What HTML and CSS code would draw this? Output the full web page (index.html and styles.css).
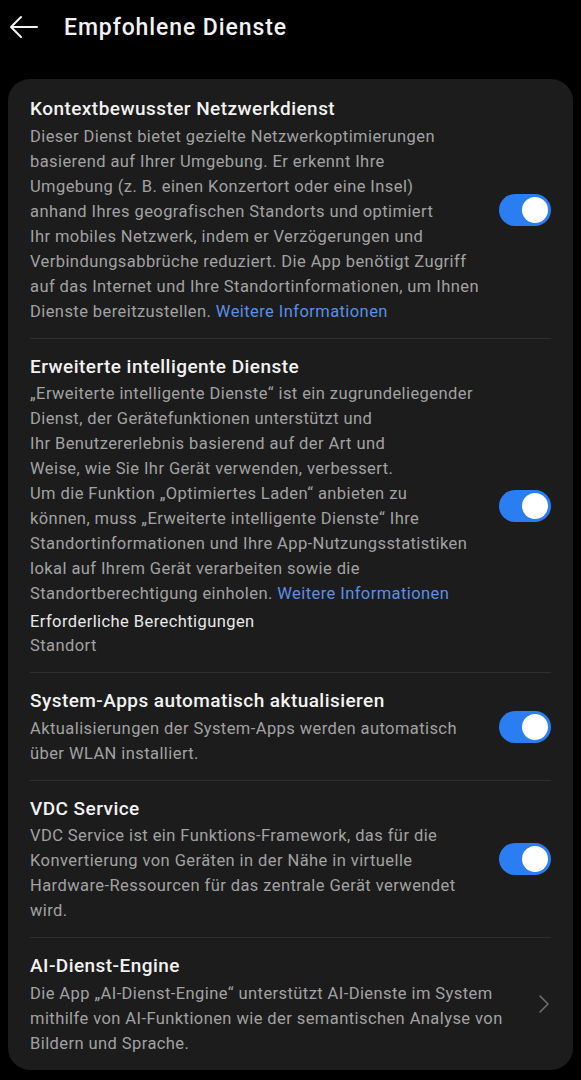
FILE: index.html
```html
<!DOCTYPE html>
<html lang="de">
<head>
    <meta charset="UTF-8">
    <meta name="viewport" content="width=device-width, initial-scale=1.0">
    <title>Empfohlene Dienste</title>
    <link rel="stylesheet" href="styles.css">
</head>
<body>
    <header class="top-bar">
        <button class="back-button" aria-label="Zurück">
            <svg width="30" height="24" viewBox="0 0 30 24">
                <path d="M28 12H2M12 2L2 12l10 10" fill="none" stroke="#f2f2f2" stroke-width="2" stroke-linecap="round" stroke-linejoin="round"/>
            </svg>
        </button>
        <h1 class="page-title">Empfohlene Dienste</h1>
    </header>

    <main class="card">
        <!-- Kontextbewusster Netzwerkdienst -->
        <section class="row">
            <div class="row-text">
                <h2 class="row-title">Kontextbewusster Netzwerkdienst</h2>
                <p class="row-desc">Dieser Dienst bietet gezielte Netzwerkoptimierungen<br>basierend auf Ihrer Umgebung. Er erkennt Ihre<br>Umgebung (z. B. einen Konzertort oder eine Insel)<br>anhand Ihres geografischen Standorts und optimiert<br>Ihr mobiles Netzwerk, indem er Verzögerungen und<br>Verbindungsabbrüche reduziert. Die App benötigt Zugriff<br>auf das Internet und Ihre Standortinformationen, um Ihnen<br>Dienste bereitzustellen. <a class="more-link" href="#">Weitere Informationen</a></p>
            </div>
            <label class="switch"><input type="checkbox" checked><span class="slider"></span></label>
        </section>

        <!-- Erweiterte intelligente Dienste -->
        <section class="row">
            <div class="row-text">
                <h2 class="row-title">Erweiterte intelligente Dienste</h2>
                <p class="row-desc">„Erweiterte intelligente Dienste“ ist ein zugrundeliegender<br>Dienst, der Gerätefunktionen unterstützt und<br>Ihr Benutzererlebnis basierend auf der Art und<br>Weise, wie Sie Ihr Gerät verwenden, verbessert.<br>Um die Funktion „Optimiertes Laden“ anbieten zu<br>können, muss „Erweiterte intelligente Dienste“ Ihre<br>Standortinformationen und Ihre App-Nutzungsstatistiken<br>lokal auf Ihrem Gerät verarbeiten sowie die<br>Standortberechtigung einholen. <a class="more-link" href="#">Weitere Informationen</a></p>
                <div class="permissions">
                    <div class="perm-label">Erforderliche Berechtigungen</div>
                    <div class="perm-value">Standort</div>
                </div>
            </div>
            <label class="switch"><input type="checkbox" checked><span class="slider"></span></label>
        </section>

        <!-- System-Apps -->
        <section class="row">
            <div class="row-text">
                <h2 class="row-title">System-Apps automatisch aktualisieren</h2>
                <p class="row-desc">Aktualisierungen der System-Apps werden automatisch<br>über WLAN installiert.</p>
            </div>
            <label class="switch"><input type="checkbox" checked><span class="slider"></span></label>
        </section>

        <!-- VDC Service -->
        <section class="row">
            <div class="row-text">
                <h2 class="row-title">VDC Service</h2>
                <p class="row-desc">VDC Service ist ein Funktions-Framework, das für die<br>Konvertierung von Geräten in der Nähe in virtuelle<br>Hardware-Ressourcen für das zentrale Gerät verwendet<br>wird.</p>
            </div>
            <label class="switch"><input type="checkbox" checked><span class="slider"></span></label>
        </section>

        <!-- AI-Dienst-Engine -->
        <section class="row">
            <div class="row-text">
                <h2 class="row-title">AI-Dienst-Engine</h2>
                <p class="row-desc">Die App „AI-Dienst-Engine“ unterstützt AI-Dienste im System<br>mithilfe von AI-Funktionen wie der semantischen Analyse von<br>Bildern und Sprache.</p>
            </div>
            <svg class="chevron" width="12" height="20" viewBox="0 0 12 20">
                <path d="M2 2l8 8-8 8" fill="none" stroke="#6f6f6f" stroke-width="1.6" stroke-linecap="round" stroke-linejoin="round"/>
            </svg>
        </section>
    </main>
</body>
</html>
```

FILE: styles.css
```css
/* General styles */
body {
    margin: 0;
    background: #000;
    color: #f2f2f2;
    font-family: Roboto, "Noto Sans", sans-serif;
}

/* Top bar */
.top-bar {
    display: flex;
    align-items: center;
    height: 54px;
    padding: 0 0 0 9px;
}

.back-button {
    background: none;
    border: 0;
    padding: 0;
    width: 30px;
    height: 24px;
    margin-right: 25px;
    cursor: pointer;
}

.page-title {
    margin: 0;
    font-size: 23px;
    font-weight: 500;
    letter-spacing: 0.9px;
    color: #f2f2f2;
}

/* Card with settings */
.card {
    margin: 25px 8px 0;
    padding: 2px 22px 0;
    background: #1c1c1c;
    border-radius: 22px;
}

.row {
    display: flex;
    align-items: center;
    padding: 15px 0 14px;
    border-bottom: 1px solid #2f2f2f;
}

.row:last-child {
    border-bottom: 0;
}

.row-text {
    flex: 1;
    min-width: 0;
}

.row-title {
    margin: 0;
    font-size: 19px;
    font-weight: 500;
    letter-spacing: 0.45px;
    line-height: 26px;
    color: #f2f2f2;
}

.row-desc {
    margin: 1.5px 0 0;
    font-size: 16.5px;
    letter-spacing: 0.42px;
    line-height: 25px;
    color: #a2a2a2;
    white-space: nowrap;
}

.more-link {
    color: #5b8fe6;
    text-decoration: none;
}

.permissions {
    margin-top: 4px;
    font-size: 16.5px;
    letter-spacing: 0.42px;
    line-height: 24px;
}

.perm-label {
    color: #e8e8e8;
}

.perm-value {
    color: #a2a2a2;
}

/* Toggle switch */
.switch {
    position: relative;
    flex: none;
    width: 52px;
    height: 32px;
    margin-left: 12px;
}

.switch input {
    display: none;
}

.slider {
    position: absolute;
    inset: 0;
    border-radius: 16px;
    background: #4a4a4a;
}

.slider::after {
    content: "";
    position: absolute;
    top: 3px;
    left: 3px;
    width: 26px;
    height: 26px;
    border-radius: 50%;
    background: #fff;
}

.switch input:checked + .slider {
    background: #2b7ef2;
}

.switch input:checked + .slider::after {
    left: 23px;
}

.chevron {
    flex: none;
    margin: 0 1px 0 12px;
}
```
